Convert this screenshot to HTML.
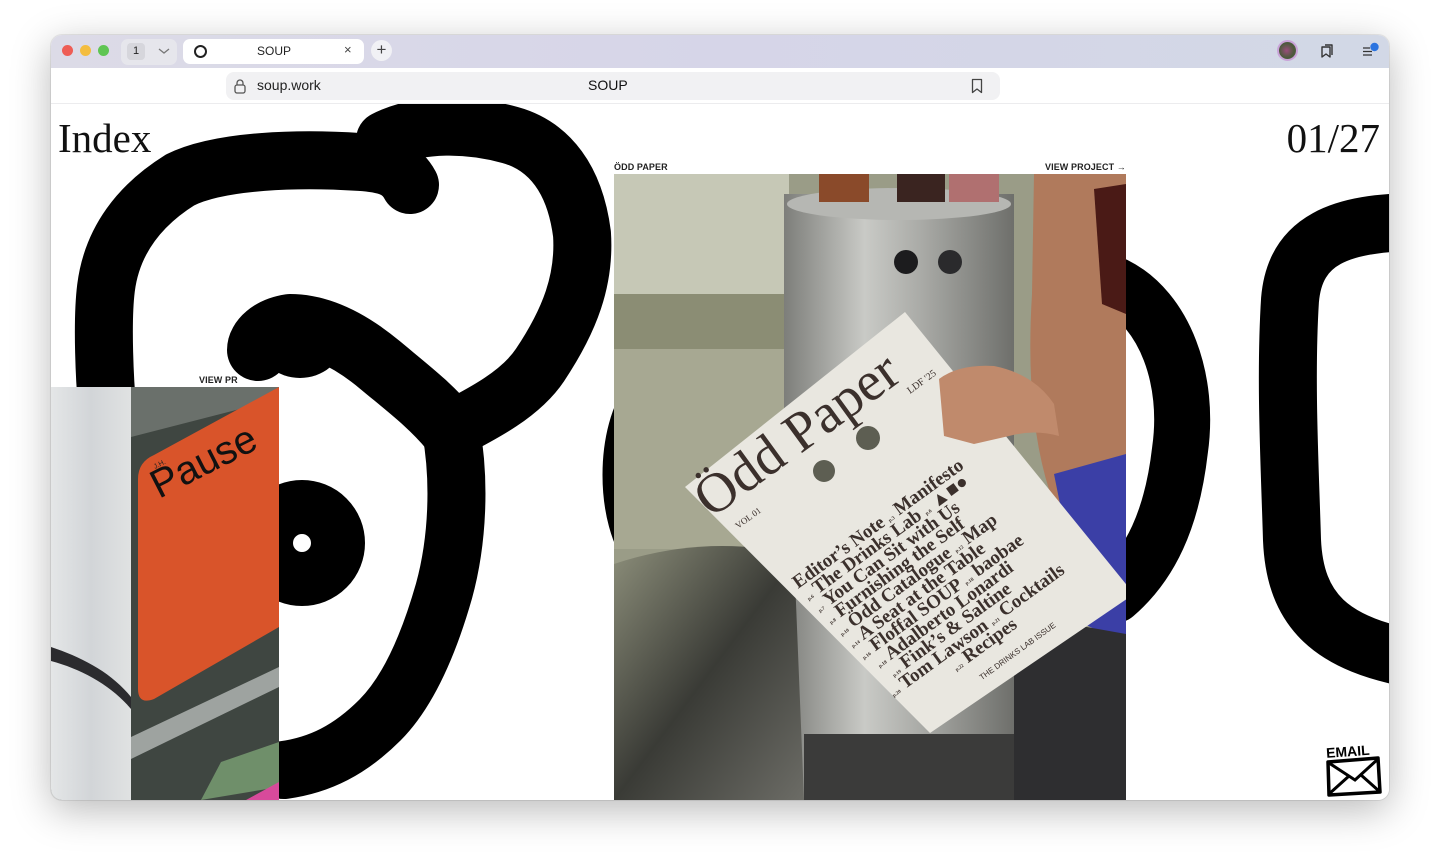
<!DOCTYPE html>
<html><head><meta charset="utf-8"><style>
*{margin:0;padding:0;box-sizing:border-box}
body{width:1440px;height:868px;background:#fff;position:relative;overflow:hidden;font-family:"Liberation Sans",sans-serif}
.win{position:absolute;left:51px;top:35px;width:1338px;height:765px;border-radius:11px;overflow:hidden;background:#fff;box-shadow:0 10px 40px rgba(0,0,0,.28),0 0 0 1px rgba(0,0,0,.08)}
.tabbar{position:absolute;left:0;top:0;width:1338px;height:33px;background:linear-gradient(90deg,#dcdbe7,#d6d5e8 50%,#d2d8e6)}
.dot{position:absolute;top:10px;width:11px;height:11px;border-radius:50%}
.toolbar{position:absolute;left:0;top:33px;width:1338px;height:36px;background:#fff;border-bottom:1px solid #ececee}
.addr{position:absolute;left:175px;top:4px;width:774px;height:28px;background:#f1f1f3;border-radius:8px}
.content{position:absolute;left:0;top:69px;width:1338px;height:696px;background:#fff;overflow:hidden}
.lbl{position:absolute;font-size:9px;font-weight:bold;color:#222;letter-spacing:.1px}
.big{position:absolute;font-family:"Liberation Serif",serif;font-size:41px;color:#111;line-height:1}
</style></head><body>
<div class="win">
 <div class="tabbar">
  <div class="dot" style="left:11px;background:#ee5d55"></div>
  <div class="dot" style="left:29px;background:#f4bd3f"></div>
  <div class="dot" style="left:47px;background:#5fc553"></div>
  <div style="position:absolute;left:70px;top:4px;width:56px;height:26px;background:#e6e6ec;border-radius:7px"></div>
  <div style="position:absolute;left:76px;top:8px;width:18px;height:17px;background:#d6d6dc;border-radius:4px;font-size:11px;text-align:center;line-height:17px;color:#222">1</div>
  <svg style="position:absolute;left:107px;top:12px" width="12" height="8"><path d="M1 2l5 4 5-4" stroke="#777" stroke-width="1.3" fill="none"/></svg>
  <div style="position:absolute;left:132px;top:4px;width:181px;height:25px;background:#fff;border-radius:7px"></div>
  <div style="position:absolute;left:143px;top:10px;width:13px;height:13px;border:2px solid #222;border-radius:50%"></div>
  <div style="position:absolute;left:206px;top:9px;font-size:12px;color:#222">SOUP</div>
  <div style="position:absolute;left:293px;top:7px;font-size:13px;color:#444">×</div>
  <div style="position:absolute;left:320px;top:5px;width:21px;height:21px;background:#f1f1f5;border-radius:50%;text-align:center;line-height:20px;font-size:17px;color:#444">+</div>
  <div style="position:absolute;left:1226px;top:5px;width:21px;height:21px;border-radius:50%;background:radial-gradient(circle at 45% 50%,#9a4c7c,#4a5a3a 60%,#6a6a5a);border:2px solid #c9a3d8"></div>
  <svg style="position:absolute;left:1268px;top:8px" width="16" height="16"><path d="M3 4h8v10l-4-3-4 3zM6 2h7v10" stroke="#333" stroke-width="1.4" fill="none" stroke-linejoin="round"/></svg>
  <svg style="position:absolute;left:1310px;top:6px" width="22" height="18"><path d="M2 7h7M2 10.5h9M2 14h9" stroke="#333" stroke-width="1.3"/><circle cx="13.5" cy="6" r="4.2" fill="#2b74e0"/></svg>
 </div>
 <div class="toolbar">
  <div class="addr">
   <svg style="position:absolute;left:8px;top:7px" width="12" height="15"><rect x="1" y="6" width="10" height="8" rx="2" stroke="#555" stroke-width="1.3" fill="none"/><path d="M3 6V4a3 3 0 016 0v2" stroke="#555" stroke-width="1.3" fill="none"/></svg>
   <div style="position:absolute;left:31px;top:5px;font-size:14px;color:#222">soup.work</div>
   <div style="position:absolute;left:362px;top:5px;font-size:14px;color:#111">SOUP</div>
   <svg style="position:absolute;left:745px;top:6px" width="12" height="16"><path d="M1.5 1.5h9v13l-4.5-3.5-4.5 3.5z" stroke="#444" stroke-width="1.3" fill="none" stroke-linejoin="round"/></svg>
  </div>
 </div>
 <div class="content">
  <svg style="position:absolute;left:-51px;top:-104px" width="1440" height="868">
   <g fill="none" stroke="#000" stroke-width="58" stroke-linecap="round" stroke-linejoin="round">
    <path d="M109 430 C104 380 102 320 106 288 C112 240 140 205 180 180 C220 160 300 158 360 162 C390 164 402 170 410 185"/>
    <path d="M385 140 C420 122 470 124 510 135 C550 146 575 180 582 234 C585 280 570 320 540 365 C520 395 480 415 451 430 C460 480 458 540 444 591 C430 640 410 690 380 720 C350 750 320 765 284 770"/>
    <path d="M451 430 C430 405 410 390 380 365 C350 340 320 325 290 325 C270 328 258 340 258 350" stroke-width="62"/>
    <circle cx="302" cy="543" r="36" stroke-width="54"/>
    <path d="M650 395 C620 430 620 520 650 555" stroke-width="50"/>
    <path d="M1115 285 C1165 310 1190 380 1180 450 C1172 520 1150 565 1115 595" stroke-width="56"/>
    <path d="M1420 222 C1340 222 1295 240 1290 300 C1285 380 1290 470 1292 540 C1295 610 1330 645 1420 660" stroke-width="58"/>
   </g>
   <ellipse cx="300" cy="342" rx="42" ry="36" fill="#000"/>
  </svg>

  <div class="big" style="left:7px;top:14px">Index</div>
  <div class="big" style="right:9px;top:14px">01/27</div>

  <div class="lbl" style="left:148px;top:271px">VIEW PR</div>
  <svg style="position:absolute;left:0;top:283px" width="228" height="413">
   <defs><linearGradient id="con" x1="0" x2="1"><stop offset="0" stop-color="#e4e6e7"/><stop offset=".5" stop-color="#d2d5d8"/><stop offset="1" stop-color="#e0e2e2"/></linearGradient></defs>
   <rect width="228" height="413" fill="#3f4641"/>
   <rect width="80" height="413" fill="url(#con)"/>
   <path d="M0 260 C30 270 60 285 80 310 L80 322 C60 298 30 282 0 274z" fill="#2b2b2e"/>
   <path d="M80 0 L228 0 L228 12 L80 50z" fill="#6a706b"/>
   <path d="M87 92 Q87 75 103 68 L228 0 L228 240 L103 312 Q87 318 87 302z" fill="#d9542a"/>
   <path d="M80 350 L228 280 L228 300 L80 372z" fill="#9ea3a0"/>
   <path d="M150 413 L170 375 L228 355 L228 400z" fill="#6f8f6a"/>
   <path d="M195 413 L228 395 L228 413z" fill="#d84a9b"/>
   <text transform="translate(104,82) rotate(-27)" font-size="7" fill="#222">J.H.</text>
   <text transform="translate(108,112) rotate(-27)" font-size="40" fill="#111" font-family="Liberation Sans">Pause</text>
  </svg>

  <div class="lbl" style="left:563px;top:58px">ÖDD PAPER</div>
  <div class="lbl" style="left:994px;top:58px">VIEW PROJECT →</div>
  <svg style="position:absolute;left:563px;top:70px" width="512" height="626">
   <defs>
    <linearGradient id="cyl" x1="0" x2="1"><stop offset="0" stop-color="#7d7e7a"/><stop offset=".35" stop-color="#c9cac6"/><stop offset=".6" stop-color="#a9aaa6"/><stop offset="1" stop-color="#6e6f6b"/></linearGradient>
    <linearGradient id="foil" x1="0" y1="0" x2="1" y2="1"><stop offset="0" stop-color="#8c8e7a"/><stop offset=".5" stop-color="#3a3b36"/><stop offset="1" stop-color="#6c6c66"/></linearGradient>
   </defs>
   <rect width="512" height="626" fill="#9a9c87"/>
   <rect width="175" height="130" fill="#c6c8b6"/>
   <rect y="120" width="175" height="55" fill="#8b8d74"/>
   <rect y="175" width="175" height="200" fill="#a7a892"/>
   <rect x="170" y="20" width="230" height="606" fill="url(#cyl)"/>
   <ellipse cx="285" cy="30" rx="112" ry="16" fill="#b6b7b3"/>
   <rect x="205" y="0" width="50" height="28" fill="#8a4a2a"/><rect x="283" y="0" width="48" height="28" fill="#3a2420"/><rect x="335" y="0" width="50" height="28" fill="#b07070"/>
   <circle cx="292" cy="88" r="12" fill="#1c1c1e"/><circle cx="336" cy="88" r="12" fill="#2a2a2c"/>
   <path d="M420 0 L512 0 L512 300 L440 330 Q410 250 418 120z" fill="#b07a5c"/>
   <path d="M480 15 L512 10 L512 140 L488 130z" fill="#4a1a16"/>
   <path d="M440 300 L512 280 L512 470 L470 450z" fill="#3b3fa6"/>
   <path d="M400 440 L512 460 L512 626 L400 626z" fill="#2e2e30"/>
   <path d="M0 390 Q90 360 180 380 L190 626 L0 626z" fill="url(#foil)"/>
   <path d="M190 560 L400 560 L400 626 L190 626z" fill="#3b3b3a"/>
   <path d="M71 313 L291 138 L520 420 L316 559z" fill="#e9e7e0"/>
   <path d="M325 205 Q345 190 380 192 Q420 200 440 230 L445 262 Q420 255 395 262 L360 270 L330 262z" fill="#c08a6c"/>
   <circle cx="210" cy="297" r="11" fill="#5d5e52"/><circle cx="254" cy="264" r="12" fill="#5d5e52"/>
   <g font-family="Liberation Serif,serif" fill="#3b302c">
    <text transform="translate(97,345) rotate(-36)" font-size="56">Ödd Paper</text>
    <text transform="translate(124,355) rotate(-36)" font-size="9">VOL 01</text>
    <text transform="translate(296,220) rotate(-36)" font-size="10">LDF '25</text>
    <g transform="translate(184,415) rotate(-36)" font-size="19" font-weight="bold">
     <text x="0" y="0">Editor’s Note <tspan font-size="5">p.3</tspan> Manifesto</text>
     <text x="2" y="16"><tspan font-size="5">p.6</tspan> The Drinks Lab <tspan font-size="5">p.6</tspan> ▲■●</text>
     <text x="4" y="32"><tspan font-size="5">p.7</tspan> You Can Sit with Us</text>
     <text x="6" y="48"><tspan font-size="5">p.8</tspan> Furnishing the Self</text>
     <text x="8" y="64"><tspan font-size="5">p.10</tspan> Ödd Catalogue <tspan font-size="5">p.12</tspan> Map</text>
     <text x="10" y="80"><tspan font-size="5">p.14</tspan> A Seat at the Table</text>
     <text x="12" y="96"><tspan font-size="5">p.16</tspan> Floffal SOUP <tspan font-size="5">p.18</tspan> baobae</text>
     <text x="20" y="112"><tspan font-size="5">p.18</tspan> Adalberto Lonardi</text>
     <text x="26" y="128"><tspan font-size="5">p.19</tspan> Fink’s &amp; Saltine</text>
     <text x="14" y="144"><tspan font-size="5">p.20</tspan> Tom Lawson <tspan font-size="5">p.21</tspan> Cocktails</text>
     <text x="80" y="160"><tspan font-size="5">p.22</tspan> Recipes</text>
     <text x="95" y="182" font-size="8" font-family="Liberation Sans" font-weight="normal">THE DRINKS LAB ISSUE</text>
    </g>
   </g>
  </svg>

  <svg style="position:absolute;left:1272px;top:636px" width="62" height="58">
   <text x="3" y="16" font-size="14" font-weight="bold" font-family="Liberation Sans" fill="#000" transform="rotate(-4 30 10)">EMAIL</text>
   <path d="M5 22 L55 18 L57 52 L6 55z" stroke="#000" stroke-width="3.5" fill="none" stroke-linejoin="round"/>
   <path d="M6 23 L32 40 L55 19 M6 54 L26 36 M56 51 L38 35" stroke="#000" stroke-width="3" fill="none"/>
  </svg>
 </div>
</div>
</body></html>
